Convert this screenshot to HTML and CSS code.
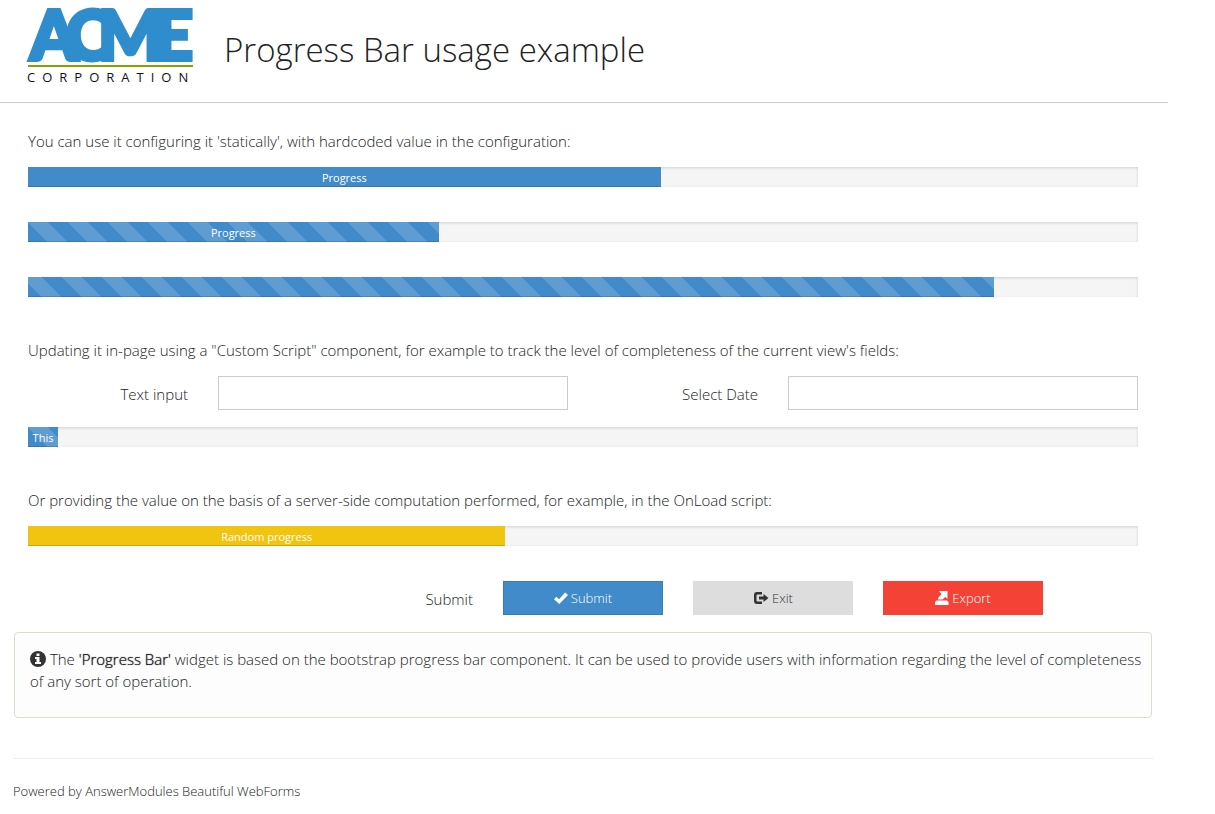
FILE: index.html
```html
<!DOCTYPE html>
<html lang="en">
<head>
<meta charset="utf-8">
<title>Progress Bar usage example</title>
<link rel="stylesheet" href="styles.css">
</head>
<body>
<div class="page">
  <header class="header">
    <svg class="logo" viewBox="0 0 168 78" role="img" aria-label="ACME Corporation">
      <text class="logo-name" x="2 38 70 126" y="54">ACME</text>
      <rect class="logo-rule" x="0" y="59" width="165" height="2"/>
      <text class="logo-sub" x="-1" y="76">CORPORATION</text>
    </svg>
    <h1 class="title">Progress Bar usage example</h1>
  </header>

  <form class="form">
    <p class="text">You can use it configuring it 'statically', with hardcoded value in the configuration:</p>
    <div class="progress"><div class="bar" role="progressbar" aria-valuenow="57" style="width:57%">Progress</div></div>
    <div class="progress"><div class="bar striped" role="progressbar" aria-valuenow="37" style="width:37%">Progress</div></div>
    <div class="progress"><div class="bar striped phase-late" role="progressbar" aria-label="Progress" aria-valuenow="87" style="width:87%"></div></div>

    <p class="text text-spaced">Updating it in-page using a "Custom Script" component, for example to track the level of completeness of the current view's fields:</p>
    <div class="grid fields">
      <label class="label span-2" for="text-input">Text input</label>
      <input class="input span-4" id="text-input" type="text">
      <label class="label span-2" for="select-date">Select Date</label>
      <input class="input span-4" id="select-date" type="text">
    </div>
    <div class="progress"><div class="bar striped bar-min" role="progressbar" aria-valuenow="0" style="width:0%">This</div></div>

    <p class="text text-spaced">Or providing the value on the basis of a server-side computation performed, for example, in the OnLoad script:</p>
    <div class="progress"><div class="bar bar-warning" role="progressbar" aria-valuenow="43" style="width:43%">Random progress</div></div>

    <div class="grid actions">
      <span class="label span-5">Submit</span>
      <button class="button primary span-2" type="submit">
        <svg class="icon" viewBox="0 0 14 14" aria-hidden="true"><path d="M0 8.300 2.300 5.800 5 8.200 11.200 1.500 14 4 5.300 13z"/></svg>
        Submit
      </button>
      <button class="button default span-2" type="button">
        <svg class="icon icon-wide" viewBox="0 0 16 14" aria-hidden="true"><path d="M9 1H4Q1 1 1 4v6q0 3 3 3h5v-2.500H4.500Q3.500 10.500 3.500 9.500v-5Q3.500 3.500 4.500 3.500H9zM10.500 3 15.500 7l-5 4V8.500H6v-3h4.500z"/></svg>
        Exit
      </button>
      <button class="button danger span-2" type="button">
        <svg class="icon" viewBox="0 0 14 14" aria-hidden="true"><path d="M4 0h8.500v8L10.300 6 7.500 8.500H3Q2.500 6.500 6.500 3.500zM1.500 9.500h10.500l1.500 1.500v3H0v-3z"/></svg>
        Export
      </button>
    </div>
  </form>

  <section class="info">
    <p class="text"><svg class="icon-info" viewBox="0 0 16 16" aria-hidden="true"><circle cx="8" cy="8" r="8"/><path d="M6.500 2.500h3v2.500h-3zM5 6h4.500v5H11v2H5v-2h1.500V8H5z"/></svg> The <b>'Progress Bar'</b> widget is based on the bootstrap progress bar component. It can be used to provide users with information regarding the level of completeness of any sort of operation.</p>
  </section>

  <footer class="footer">Powered by AnswerModules Beautiful WebForms</footer>
</div>
</body>
</html>
```
FILE: styles.css
```css
* { box-sizing: border-box; }

body {
  margin: 0;
  background: #fff;
  color: #222;
  font-family: "Open Sans", "Noto Sans", sans-serif;
  font-size: 15px;
  font-weight: 300;
  line-height: 22px;
}

.page { max-width: 1168px; }

.header {
  display: flex;
  align-items: flex-start;
  gap: 28px;
  padding: 6px 28px 18px;
  border-bottom: 1px solid #ccc;
}

.logo { width: 168px; height: 78px; overflow: visible; flex: none; }
.logo-name {
  font: 900 68px Lato, sans-serif;
  fill: #2f8ccd;
  stroke: #2f8ccd;
  stroke-width: 4px;
}
.logo-rule { fill: #7ea600; }
.logo-sub { font: 400 13px "Open Sans", sans-serif; letter-spacing: 7px; fill: #111; }

.title { margin: 20px 0 0; font-size: 33px; font-weight: 300; line-height: 48px; }

.form { padding: 27px 30px 17px 28px; }

.text { margin: 0 0 15px; }
.text-spaced { padding-top: 7px; }

.progress {
  height: 20px;
  margin-bottom: 35px;
  background: #f5f5f5;
  box-shadow: inset 0 1px 3px rgba(0, 0, 0, 0.15);
}

.bar {
  height: 20px;
  background-color: #428bca;
  box-shadow: inset 0 -1px 0 rgba(0, 0, 0, 0.15);
  color: #fff;
  font-size: 11px;
  font-weight: 400;
  line-height: 22px;
  text-align: center;
}
.bar-min { min-width: 30px; }
.bar-warning { background-color: #f1c40f; }

.striped {
  background-image: linear-gradient(45deg,
    rgba(255, 255, 255, 0.15) 25%, transparent 25%, transparent 50%,
    rgba(255, 255, 255, 0.15) 50%, rgba(255, 255, 255, 0.15) 75%,
    transparent 75%, transparent);
  background-size: 40px 40px;
}
.phase-late { background-position: -6px 0; }

.grid {
  display: grid;
  grid-template-columns: repeat(12, minmax(0, 1fr));
  column-gap: 30px;
  align-items: center;
}
.span-2 { grid-column: span 2; }
.span-4 { grid-column: span 4; }
.span-5 { grid-column: span 5; }

.fields { margin-bottom: 17px; }

.label { padding-top: 2px; text-align: right; }

.input {
  width: 100%;
  height: 34px;
  padding: 6px 12px;
  border: 1px solid #ccc;
  border-radius: 0;
  background: #fff;
  font: inherit;
}

.button {
  display: flex;
  align-items: center;
  justify-content: center;
  gap: 3px;
  height: 34px;
  padding: 0;
  border: 1px solid transparent;
  color: #fff;
  font: inherit;
  font-size: 13px;
}
.primary { background: #428bca; border-color: #357ebd; }
.default { background: #ddd; border-color: #ddd; color: #333; }
.danger { background: #f44336; border-color: #f44336; }

.icon { width: 14px; height: 14px; fill: currentColor; }
.icon-wide { width: 16px; }

.info {
  min-height: 86px;
  margin: 0 16px 40px 14px;
  padding: 15px 8px 15px 15px;
  border: 1px solid #dcdcc8;
  border-radius: 4px;
  background: #fdfdfd;
}
.info .text { margin: 0; }
.info b { font-weight: 300; text-shadow: 0 0 1px #222; }

.icon-info { width: 16px; height: 16px; vertical-align: -2px; }
.icon-info circle { fill: #333; }
.icon-info path { fill: #fff; }

.footer {
  margin: 0 15px 0 13px;
  padding-top: 21px;
  border-top: 1px solid #eee;
  font-size: 13px;
}
```
